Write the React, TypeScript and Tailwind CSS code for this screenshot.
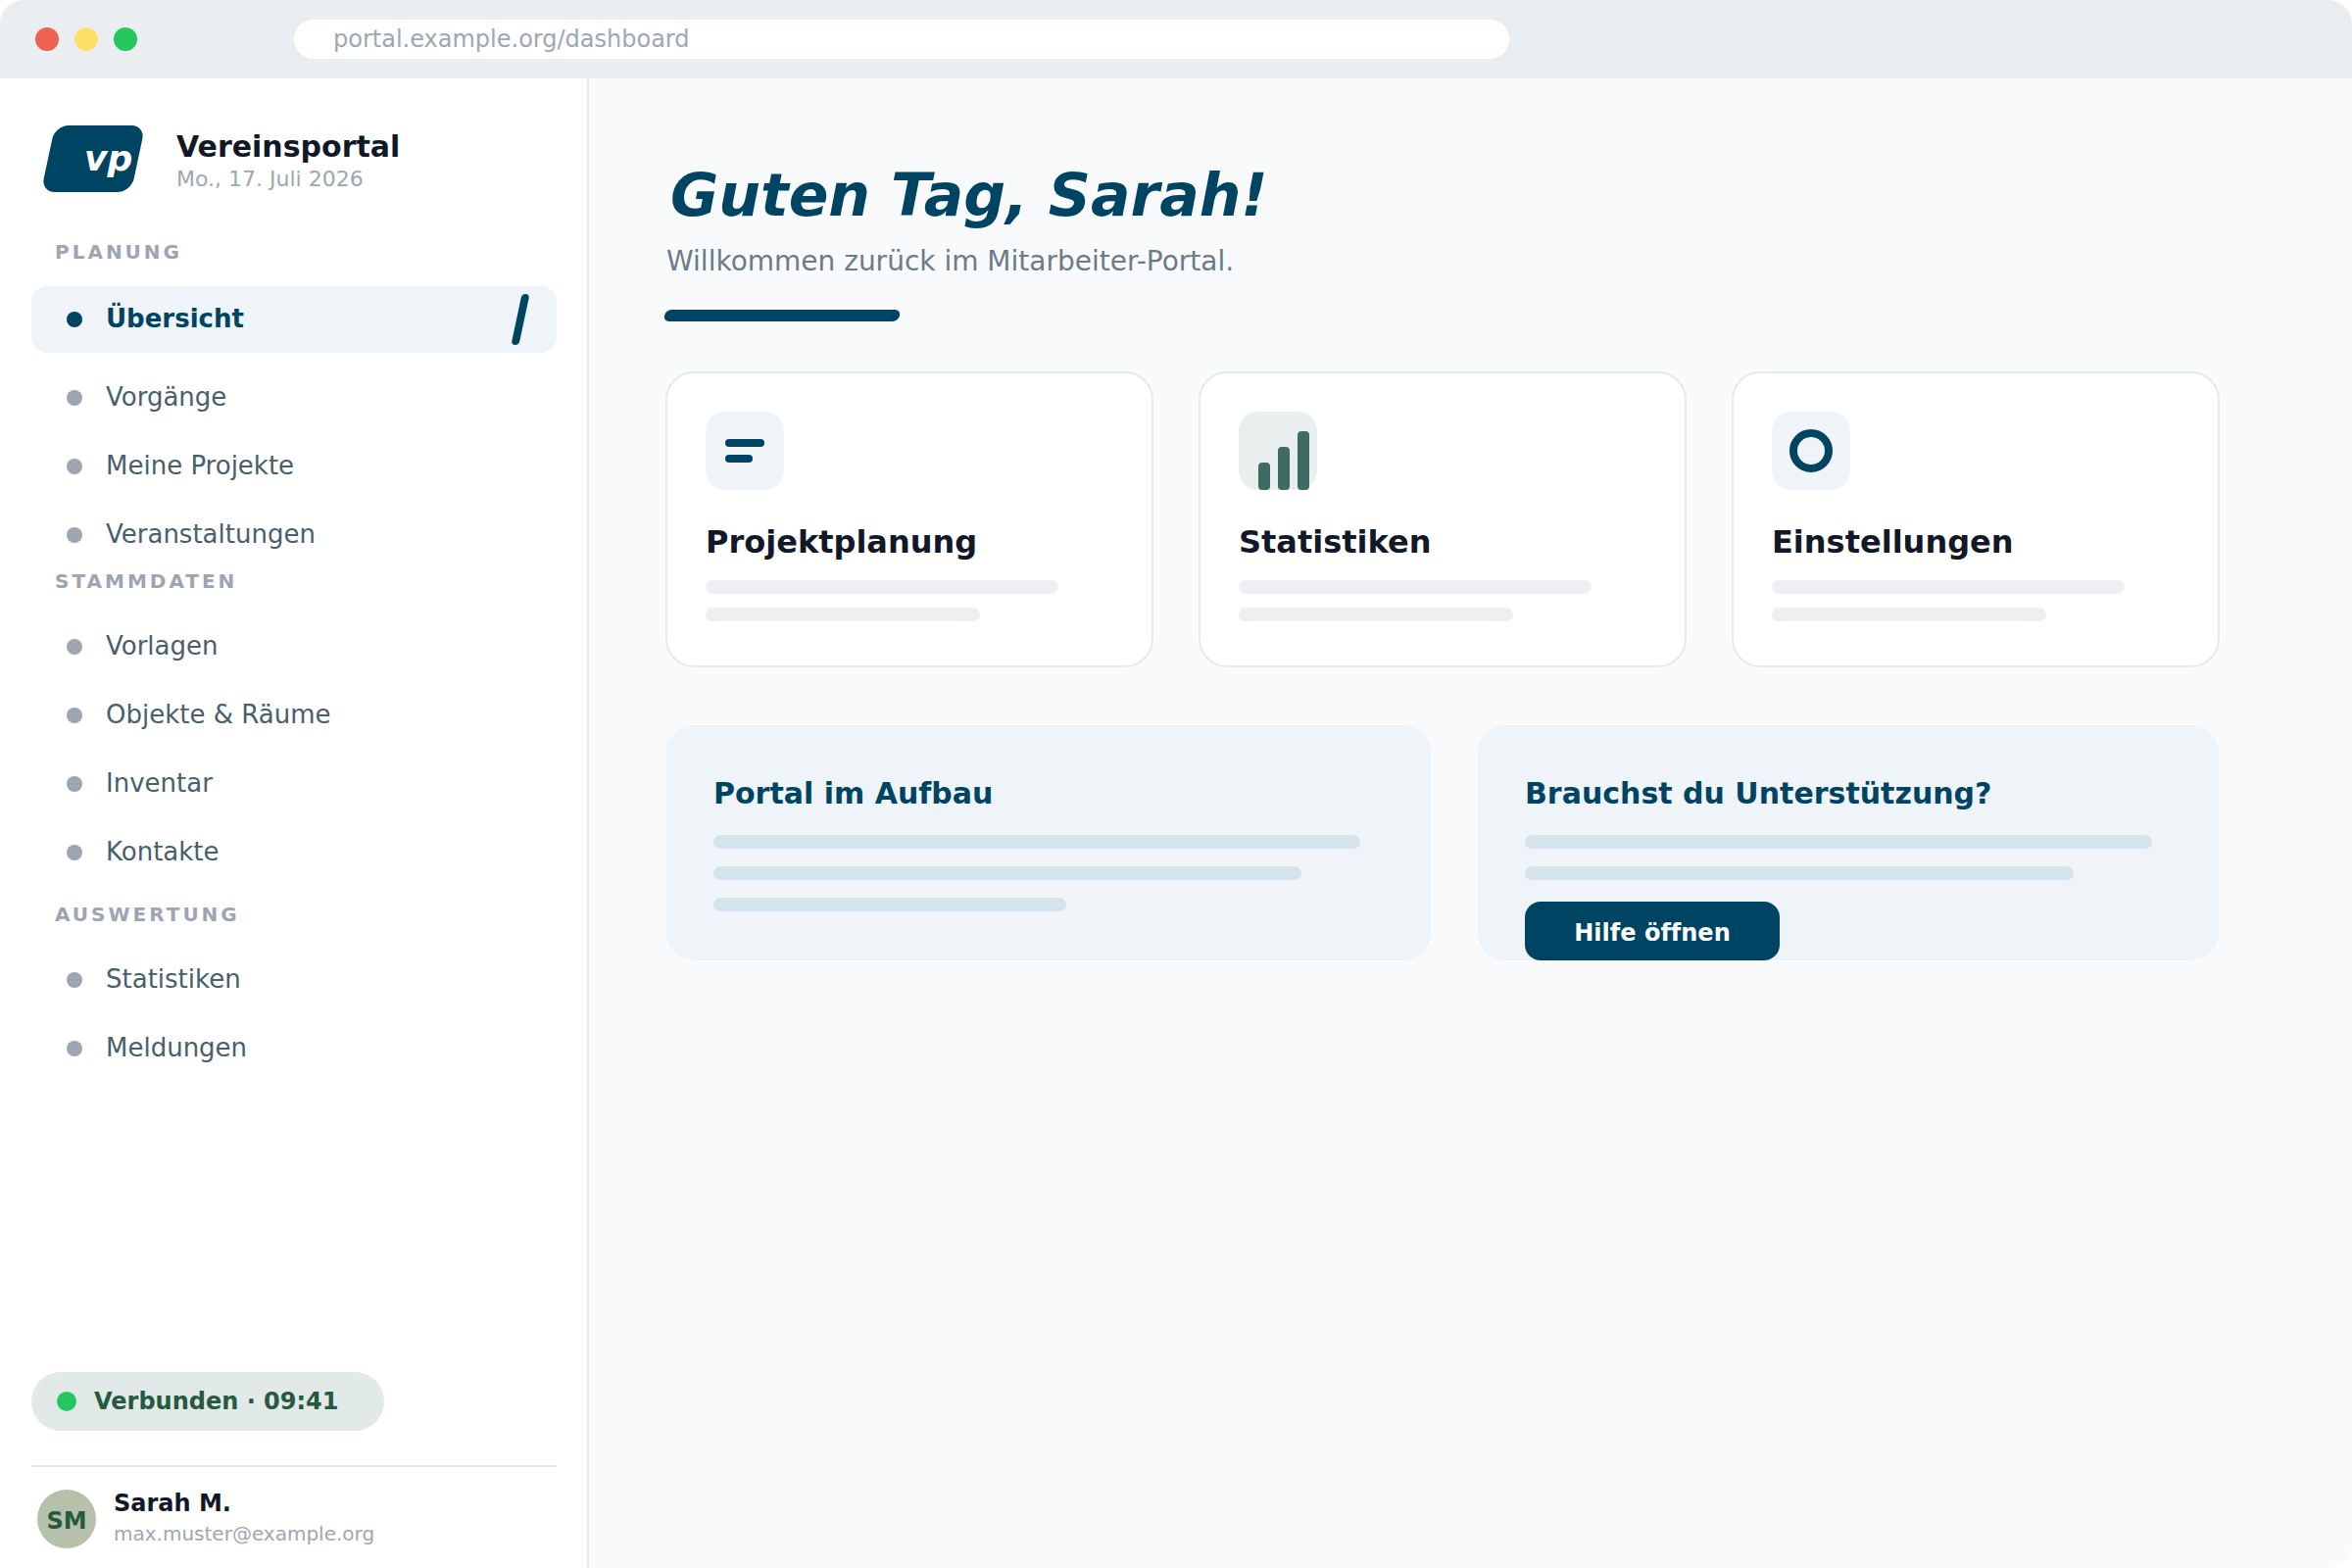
const navigation = [
  { title: "STAMMDATEN", gap: "mt-0", items: ["Vorlagen", "Objekte & Räume", "Inventar", "Kontakte"] },
  { title: "AUSWERTUNG", gap: "mt-4", items: ["Statistiken", "Meldungen"] },
];

function SectionLabel({ children }: { children: string }) {
  return (
    <h2 className="ml-14 text-[20px] leading-[24px] font-bold tracking-[3px] text-[#9ca5b1]">{children}</h2>
  );
}

function NavItem({ label }: { label: string }) {
  return (
    <a className="flex h-[70px] items-center gap-6 pl-[68px]">
      <span className="size-4 rounded-full bg-[#9ca5b1]" />
      <span className="pb-[2px] text-[26px] leading-[30px] text-[#47606b]">{label}</span>
    </a>
  );
}

function ListIcon() {
  return (
    <div className="flex size-20 flex-col gap-2 rounded-[20px] bg-[#eef4f8] pt-7 pl-5">
      <span className="h-2 w-10 rounded-full bg-[#004463]" />
      <span className="h-2 w-7 rounded-full bg-[#004463]" />
    </div>
  );
}

function ChartIcon() {
  return (
    <div className="flex size-20 items-end gap-2 rounded-[20px] bg-[#e9eeef] pl-5">
      <span className="h-7 w-3 rounded-[4px] bg-[#3f6b65]" />
      <span className="h-11 w-3 rounded-[4px] bg-[#3f6b65]" />
      <span className="h-15 w-3 rounded-[4px] bg-[#3f6b65]" />
    </div>
  );
}

function RingIcon() {
  return (
    <div className="flex size-20 items-center justify-center rounded-[20px] bg-[#eef4f8]">
      <span className="size-11 rounded-full border-8 border-[#004463]" />
    </div>
  );
}

const cards = [
  { title: "Projektplanung", icon: <ListIcon /> },
  { title: "Statistiken", icon: <ChartIcon /> },
  { title: "Einstellungen", icon: <RingIcon /> },
];

export default function App() {
  return (
    <div className="flex h-[1600px] w-[2400px] flex-col overflow-hidden rounded-[24px] bg-white font-['DejaVu_Sans',sans-serif]">
      <header className="flex h-20 shrink-0 items-center bg-[#ebeef1] pl-9">
        <div className="flex w-[264px] gap-4">
          <span className="size-6 rounded-full bg-[#ed6150]" />
          <span className="size-6 rounded-full bg-[#ffe066]" />
          <span className="size-6 rounded-full bg-[#24c660]" />
        </div>
        <div className="flex h-10 w-[1240px] items-center rounded-full bg-white pl-10 text-[24px] leading-[28px] text-[#9ca8b2]">
          portal.example.org/dashboard
        </div>
      </header>

      <div className="flex min-h-0 flex-1">
        <aside className="flex w-[601px] shrink-0 flex-col border-r-2 border-[#e2ece9] bg-white pt-12">
          <div className="flex h-[68px]">
            <div className="ml-[49px] h-[68px] w-[92px] -skew-x-12 rounded-[14px] bg-[#004463] pt-[13px] pl-[37px]">
              <span className="block skew-x-12 text-[36px] leading-[42px] font-bold text-white italic">vp</span>
            </div>
            <div className="ml-[39px] pt-1">
              <div className="text-[30px] leading-[35px] font-bold text-[#111827]">Vereinsportal</div>
              <div className="mt-[3px] text-[22px] leading-[25px] text-[#9ca8b2]">Mo., 17. Juli 2026</div>
            </div>
          </div>

          <nav className="mt-[49px]">
            <SectionLabel>PLANUNG</SectionLabel>
            <a className="mt-[23px] mb-[11px] ml-8 flex h-[68px] w-[536px] items-center gap-6 rounded-[16px] bg-[#eef4f8] pr-[33px] pl-9">
              <span className="size-4 rounded-full bg-[#004463]" />
              <span className="flex-1 pb-[2px] text-[26px] leading-[30px] font-bold text-[#004463]">Übersicht</span>
              <span className="h-[52px] w-2 -skew-x-12 rounded-[4px] bg-[#004463]" />
            </a>
            <NavItem label="Vorgänge" />
            <NavItem label="Meine Projekte" />
            <NavItem label="Veranstaltungen" />
            {navigation.map((section) => (
              <div key={section.title} className={section.gap}>
                <SectionLabel>{section.title}</SectionLabel>
                <div className="mt-5">
                  {section.items.map((label) => (
                    <NavItem key={label} label={label} />
                  ))}
                </div>
              </div>
            ))}
          </nav>

          <div className="mt-auto ml-8 flex h-[60px] w-[360px] items-center gap-[18px] rounded-full bg-[#e2e9e9] pl-[26px]">
            <span className="size-5 rounded-full bg-[#24c660]" />
            <span className="text-[24px] leading-[28px] font-bold text-[#27593f]">Verbunden · 09:41</span>
          </div>
          <div className="mt-[35px] ml-8 flex h-[105px] w-[536px] border-t-2 border-[#e2ece9] pt-[23px] pl-[6px]">
            <div className="flex size-[60px] items-center justify-center rounded-full bg-[#b5c2a9] pt-1 text-[24px] leading-[28px] font-bold text-[#27593f]">
              SM
            </div>
            <div className="ml-[18px]">
              <div className="text-[24px] leading-[28px] font-bold text-[#111827]">Sarah M.</div>
              <div className="mt-[5px] text-[20px] leading-[24px] text-[#9ca8b2]">max.muster@example.org</div>
            </div>
          </div>
        </aside>

        <main className="flex-1 bg-[#f9fafc] pt-[84px] pl-[78px]">
          <h1 className="ml-[5px] text-[60px] leading-[70px] font-bold text-[#004463] italic">Guten Tag, Sarah!</h1>
          <p className="mt-4 ml-px text-[28px] leading-[33px] text-[#6b7c88]">
            Willkommen zurück im Mitarbeiter-Portal.
          </p>
          <div className="mt-[33px] -ml-px h-3 w-[240px] -skew-x-12 rounded-[6px] bg-[#004463]" />

          <div className="mt-[51px] flex gap-[46px]">
            {cards.map((card) => (
              <section
                key={card.title}
                className="h-[302px] w-[498px] rounded-[29px] border-2 border-[#e2ece9] bg-white p-[39px]"
              >
                {card.icon}
                <h3 className="mt-[34px] text-[32px] leading-[38px] font-bold text-[#111827]">{card.title}</h3>
                <div className="mt-5 h-[14px] w-[360px] rounded-full bg-[#edeff3]" />
                <div className="mt-[14px] h-[14px] w-[280px] rounded-full bg-[#edeff3]" />
              </section>
            ))}
          </div>

          <div className="mt-[59px] ml-px flex gap-12">
            <section className="h-[240px] w-[780px] rounded-[28px] bg-[#eef4f8] pt-[52px] pl-12">
              <h3 className="text-[30px] leading-[35px] font-bold text-[#004463]">Portal im Aufbau</h3>
              <div className="mt-[25px] flex flex-col gap-[18px]">
                <div className="h-[14px] w-[660px] rounded-full bg-[#d5e3ec]" />
                <div className="h-[14px] w-[600px] rounded-full bg-[#d5e3ec]" />
                <div className="h-[14px] w-[360px] rounded-full bg-[#d5e3ec]" />
              </div>
            </section>
            <section className="h-[240px] w-[756px] rounded-[28px] bg-[#eef4f8] pt-[52px] pl-12">
              <h3 className="text-[30px] leading-[35px] font-bold text-[#004463]">Brauchst du Unterstützung?</h3>
              <div className="mt-[25px] flex flex-col gap-[18px]">
                <div className="h-[14px] w-[640px] rounded-full bg-[#d5e3ec]" />
                <div className="h-[14px] w-[560px] rounded-full bg-[#d5e3ec]" />
              </div>
              <button className="mt-[22px] block h-[60px] w-[260px] rounded-[16px] bg-[#004463] pt-1 text-[24px] leading-[28px] font-bold text-white [font-variant-ligatures:none]">
                Hilfe öffnen
              </button>
            </section>
          </div>
        </main>
      </div>
    </div>
  );
}
